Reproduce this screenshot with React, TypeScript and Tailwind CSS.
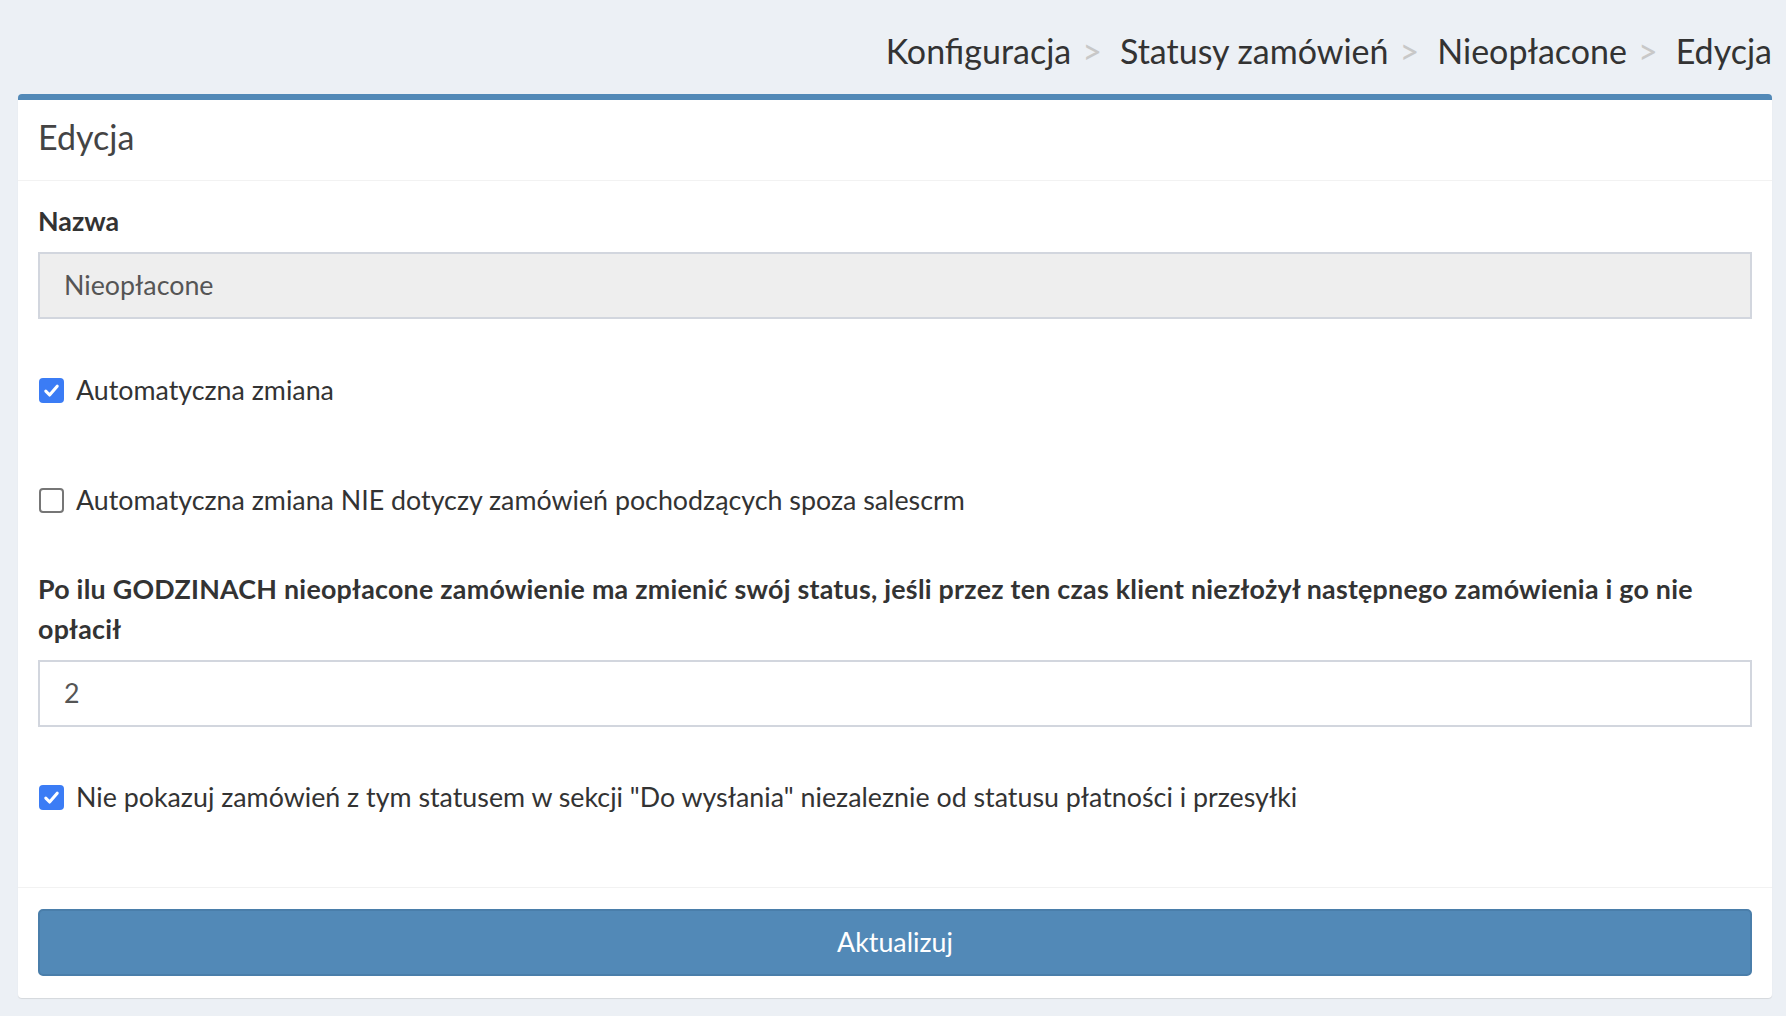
import React from "react";

const Check = ({ checked }: { checked: boolean }) =>
  checked ? (
    <span className="flex h-[25px] w-[25px] shrink-0 items-center justify-center rounded-[4px] bg-[#3b7cf5]">
      <svg viewBox="0 0 16 16" className="h-[19px] w-[19px]">
        <path d="M3.2 8.6 L6.4 11.8 L12.8 4.4" fill="none" stroke="#fff" strokeWidth="2.6" strokeLinecap="round" strokeLinejoin="round" />
      </svg>
    </span>
  ) : (
    <span className="h-[25px] w-[25px] shrink-0 rounded-[4px] border-2 border-[#767676] bg-white" />
  );

const Sep = () => <span className="ml-[11px] mr-[18px] text-[#c8c8c8]">&gt;</span>;

export default function App() {
  return (
    <div
      className="min-h-[1016px] bg-[#ecf0f5] pl-[18px] pr-[14px] text-[#333]"
      style={{ fontFamily: "Lato, 'Noto Sans', sans-serif" }}
    >
      <div className="flex h-[94px] items-start justify-end pt-[31px] text-[34px] leading-[40px] text-[#333]">
        <span>Konfiguracja</span>
        <Sep />
        <span>Statusy zamówień</span>
        <Sep />
        <span>Nieopłacone</span>
        <Sep />
        <span>Edycja</span>
      </div>
      <div className="rounded-[4px] border-t-[6px] border-[#5289b7] bg-white shadow-[0_1px_1px_rgba(0,0,0,0.1)]">
        <div className="border-b border-[#f2f2f2] px-[20px] pt-[17px] pb-[23px] text-[34px] leading-[40px] text-[#444]">
          Edycja
        </div>
        <div className="px-[20px] pb-[72px] text-[26.8px]">
          <div className="pt-[22px] font-bold leading-[36px]">Nazwa</div>
          <div className="mt-[13px] flex h-[67px] items-center border-2 border-[#d2d6de] bg-[#eeeeee] px-[24px] text-[#555]">
            Nieopłacone
          </div>
          <div className="mt-[53px] flex items-center gap-[12px] pl-[1px] leading-[36px]">
            <Check checked />
            <span>Automatyczna zmiana</span>
          </div>
          <div className="mt-[74px] flex items-center gap-[12px] pl-[1px] leading-[36px]">
            <Check checked={false} />
            <span>Automatyczna zmiana NIE dotyczy zamówień pochodzących spoza salescrm</span>
          </div>
          <div className="mt-[51px] font-bold leading-[40px] tracking-[0.25px]">
            Po ilu GODZINACH nieopłacone zamówienie ma zmienić swój status, jeśli przez ten czas klient niezłożył następnego zamówienia i go nie opłacił
          </div>
          <div className="mt-[11px] flex h-[67px] items-center border-2 border-[#d2d6de] bg-white px-[24px] text-[#555]">
            2
          </div>
          <div className="mt-[52px] flex items-center gap-[12px] pl-[1px] leading-[36px]">
            <Check checked />
            <span>Nie pokazuj zamówień z tym statusem w sekcji "Do wysłania" niezaleznie od statusu płatności i przesyłki</span>
          </div>
        </div>
        <div className="border-t border-[#f2f2f2] px-[20px] pt-[21px] pb-[22px]">
          <button className="flex h-[67px] w-full items-center justify-center rounded-[5px] border-2 border-[#4a7eaa] bg-[#5289b7] text-[26.8px] text-white">
            Aktualizuj
          </button>
        </div>
      </div>
    </div>
  );
}
